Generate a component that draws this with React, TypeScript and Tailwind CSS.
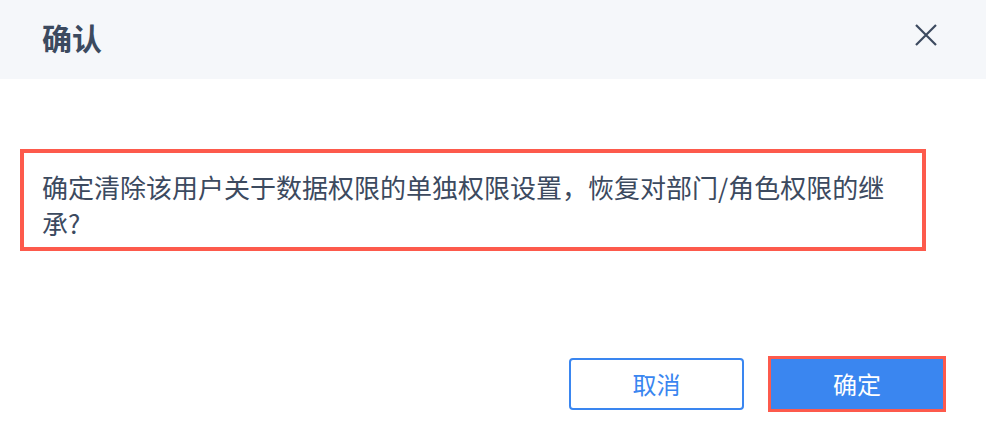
export default function App() {
  return (
    <div
      className="flex h-[424px] w-[986px] flex-col bg-white"
      style={{ fontFamily: '"Noto Sans CJK SC", "Noto Sans", sans-serif' }}
    >
      <div className="flex h-[79px] items-center justify-between bg-[#f5f7fa] pl-[42px] pr-[49px]">
        <h1 className="-mt-[6px] text-[30px] font-bold leading-none text-[#3c4a5f]">确认</h1>
        <button className="-mt-[10px] text-[#3c4a5f]" aria-label="close">
          <svg width="22" height="22" viewBox="0 0 22 22" fill="none" stroke="currentColor" strokeWidth="2.2">
            <path d="M1 1L21 21M21 1L1 21" />
          </svg>
        </button>
      </div>

      <div className="mt-[70px] ml-[20px] w-[906px] border-4 border-[#fd5a4c] pb-[6px] pl-[18px] pr-[18px] pt-[16px]">
        <p className="text-[26px] leading-[36px] text-[#3c4a5f]">
          确定清除该用户关于数据权限的单独权限设置，恢复对部门/角色权限的继承?
        </p>
      </div>

      <div className="mt-auto mb-[12px] flex items-center justify-end gap-[24px] pr-[40px]">
        <button className="h-[52px] w-[175px] rounded-[4px] border-2 border-[#3a86f0] bg-white text-[24px] text-[#3a86f0]">
          取消
        </button>
        <div className="border-[3px] border-[#fd5a4c]">
          <button className="h-[50px] w-[172px] bg-[#3a86f0] text-[24px] text-white">确定</button>
        </div>
      </div>
    </div>
  );
}
